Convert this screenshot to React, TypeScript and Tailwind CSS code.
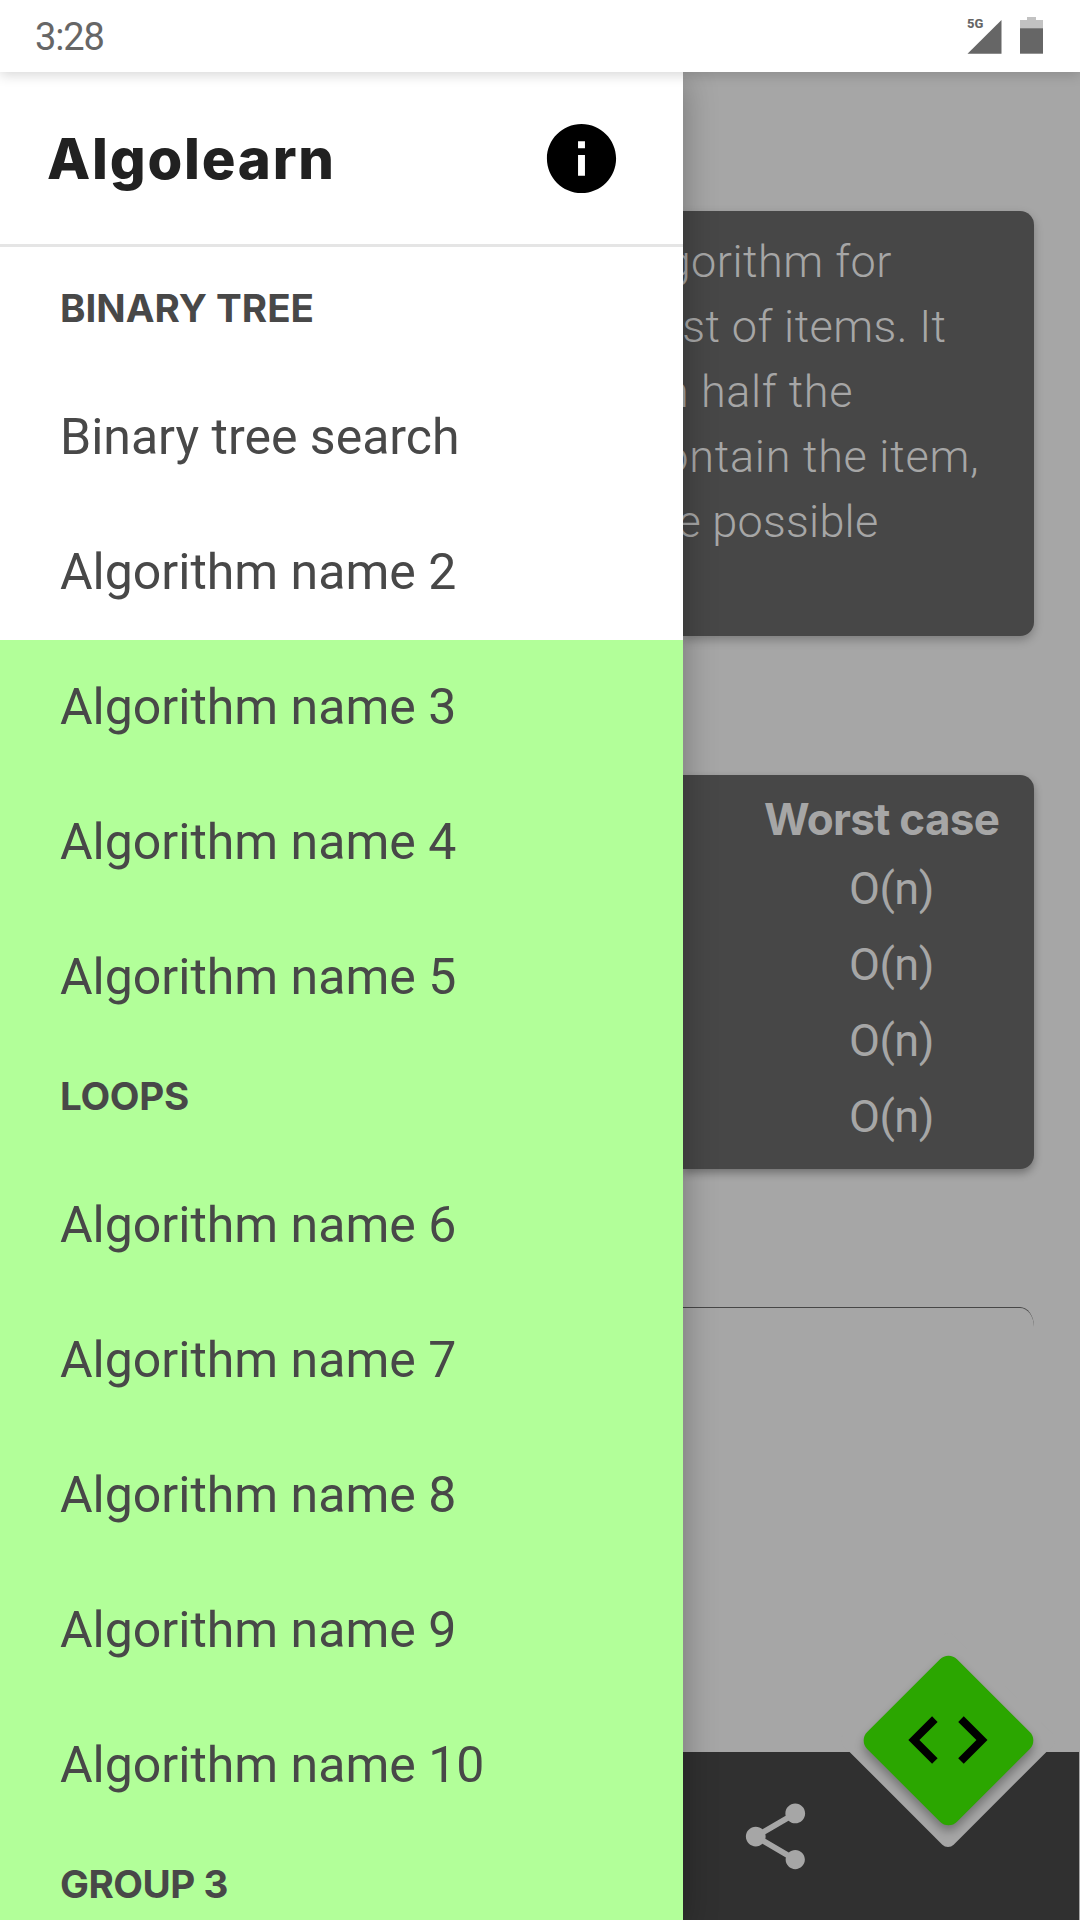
const listOne = ["Binary tree search", "Algorithm name 2"];
const listTwo = ["Algorithm name 3", "Algorithm name 4", "Algorithm name 5"];
const listThree = [
  "Algorithm name 6",
  "Algorithm name 7",
  "Algorithm name 8",
  "Algorithm name 9",
  "Algorithm name 10",
];

const descriptionLines = [
  { text: "algorithm for", className: "pr-[188px] tracking-[0.5px]" },
  { text: "list of items. It", className: "pr-[133.5px] tracking-[0.4px]" },
  { text: "in half the", className: "pr-[227px] tracking-[0.6px]" },
  { text: "contain the item,", className: "pr-[100.5px] tracking-[0.75px]" },
  { text: "the possible", className: "pr-[201.5px] tracking-[0.25px]" },
];

function GroupTitle({ text, className }: { text: string; className: string }) {
  return (
    <h2 className={`h-[113px] pl-[60px] font-[Inter,sans-serif] text-[38.6px] leading-[102px] font-bold whitespace-nowrap text-[#484848] ${className}`}>
      {text}
    </h2>
  );
}

function Item({ text }: { text: string }) {
  return (
    <li className="h-[135px] pl-[60px] text-[50px] leading-[134px] whitespace-nowrap text-[#484848]">{text}</li>
  );
}

function StatusBar() {
  return (
    <header className="relative z-30 flex h-[72px] shrink-0 items-start justify-between bg-white pr-[36px] pl-[35px] shadow-[0_3px_12px_rgba(0,0,0,0.16)]">
      <span className="text-[38px] leading-[74px] tracking-[-1.1px] text-[#666]">3:28</span>
      <div className="flex pt-[17px]">
        <div className="relative">
          <svg width="35" height="37" viewBox="0 0 35 37" fill="#666">
            <path d="M0.5 36.7L34.5 3V36.7Z" />
          </svg>
          <span className="absolute top-0 left-0 text-[13px] leading-[13px] font-extrabold text-[#666]">5G</span>
        </div>
        <svg className="ml-[18px]" width="24" height="37" viewBox="0 0 24 37">
          <path fill="#c2c2c2" d="M7 0h9v3h7v9H0V3h7z" />
          <path fill="#666" d="M0 11.3h23V36.7H0z" />
        </svg>
      </div>
    </header>
  );
}

function Drawer() {
  return (
    <aside className="relative z-20 flex h-[1848px] w-[683px] shrink-0 flex-col bg-white shadow-[0_8px_32px_rgba(0,0,0,0.3)]">
      <div className="flex h-[175px] shrink-0 items-start justify-between border-b-[3px] border-[#e5e5e5] pr-[60px] pl-[47px]">
        <h1 className="font-[Inter,sans-serif] text-[56.2px] leading-[174px] font-extrabold tracking-[1.8px] text-[#212121]">Algolearn</h1>
        <svg className="mt-[45px]" width="83" height="83" viewBox="0 0 24 24">
          <path d="M12 2C6.48 2 2 6.48 2 12s4.48 10 10 10 10-4.48 10-10S17.52 2 12 2zm1 15h-2v-6h2v6zm0-8h-2V7h2v2z" />
        </svg>
      </div>
      <div className="pt-[10px]">
        <GroupTitle text="BINARY TREE" className="tracking-[0px]" />
        <ul>{listOne.map((t) => <Item key={t} text={t} />)}</ul>
      </div>
      <div className="h-[1280px] overflow-hidden bg-[#b2ff99]">
        <ul>{listTwo.map((t) => <Item key={t} text={t} />)}</ul>
        <GroupTitle text="LOOPS" className="tracking-[-0.3px]" />
        <ul>{listThree.map((t) => <Item key={t} text={t} />)}</ul>
        <GroupTitle text="GROUP 3" className="tracking-[-0.5px]" />
      </div>
    </aside>
  );
}

function Content() {
  return (
    <main className="flex h-[1848px] w-[397px] flex-col overflow-hidden text-[#a6a6a6]">
      <section className="mt-[139px] mr-[46px] h-[425px] shrink-0 rounded-r-[14px] bg-[#474747] pt-[18px] shadow-[0_4px_10px_rgba(0,0,0,0.25)]">
        <div className="w-[397px]">
          {descriptionLines.map((l) => (
            <p key={l.text} className={`flex h-[65px] justify-end text-[45px] leading-[65px] font-light whitespace-nowrap ${l.className}`}>
              {l.text}
            </p>
          ))}
        </div>
      </section>
      <section className="mt-[139px] mr-[46px] flex h-[394px] shrink-0 flex-col rounded-r-[14px] bg-[#474747] shadow-[0_4px_8px_rgba(0,0,0,0.32)]">
        <h3 className="h-[75px] pl-[81px] font-[Inter,sans-serif] text-[44px] leading-[88px] font-bold tracking-[-0.7px] whitespace-nowrap">Worst case</h3>
        {[0, 1, 2, 3].map((i) => (
          <p key={i} className="h-[76px] pl-[166px] text-[45px] leading-[77px] tracking-[-0.5px]">O(n)</p>
        ))}
      </section>
      <section className="mt-[138px] mr-[46px] h-[21px] shrink-0 rounded-tr-[14px_20px] border-t border-[#474747]" />
      <footer className="relative mt-[424px] mr-px h-[168px] shrink-0 bg-[#303030]">
        <svg className="mt-[44.5px] ml-[53px]" width="79" height="79" viewBox="0 0 24 24" fill="#a6a6a6">
          <path d="M18 16.08c-.76 0-1.44.3-1.96.77L8.91 12.7c.05-.23.09-.46.09-.7s-.04-.47-.09-.7l7.05-4.11c.54.5 1.25.81 2.04.81 1.66 0 3-1.34 3-3s-1.34-3-3-3-3 1.34-3 3c0 .24.04.47.09.7L8.04 9.81C7.5 9.31 6.79 9 6 9c-1.66 0-3 1.34-3 3s1.34 3 3 3c.79 0 1.5-.31 2.04-.81l7.12 4.16c-.05.21-.08.43-.08.65 0 1.61 1.31 2.92 2.92 2.92 1.61 0 2.92-1.31 2.92-2.92s-1.31-2.92-2.92-2.92z" />
        </svg>
        <div className="absolute top-[-90px] left-[187.25px] size-[156px] rotate-45 rounded-[8px] bg-[#a6a6a6]" />
        <button className="absolute top-[-75.5px] left-[201.75px] flex size-[127px] rotate-45 items-center justify-center rounded-[12px] bg-[#2ba600] shadow-[4px_4px_10px_rgba(0,0,0,0.3)]">
          <svg className="shrink-0 -rotate-45" width="95" height="95" viewBox="0.15 0.1 24 24">
            <path d="M9.4 16.6L4.8 12l4.6-4.6L8 6l-6 6 6 6 1.4-1.4zm5.2 0l4.6-4.6-4.6-4.6L16 6l6 6-6 6-1.4-1.4z" />
          </svg>
        </button>
      </footer>
    </main>
  );
}

export default function App() {
  return (
    <div className="flex h-[1920px] w-[1080px] flex-col overflow-hidden bg-[#a6a6a6] font-[Roboto,sans-serif]">
      <StatusBar />
      <div className="flex">
        <Drawer />
        <Content />
      </div>
    </div>
  );
}
